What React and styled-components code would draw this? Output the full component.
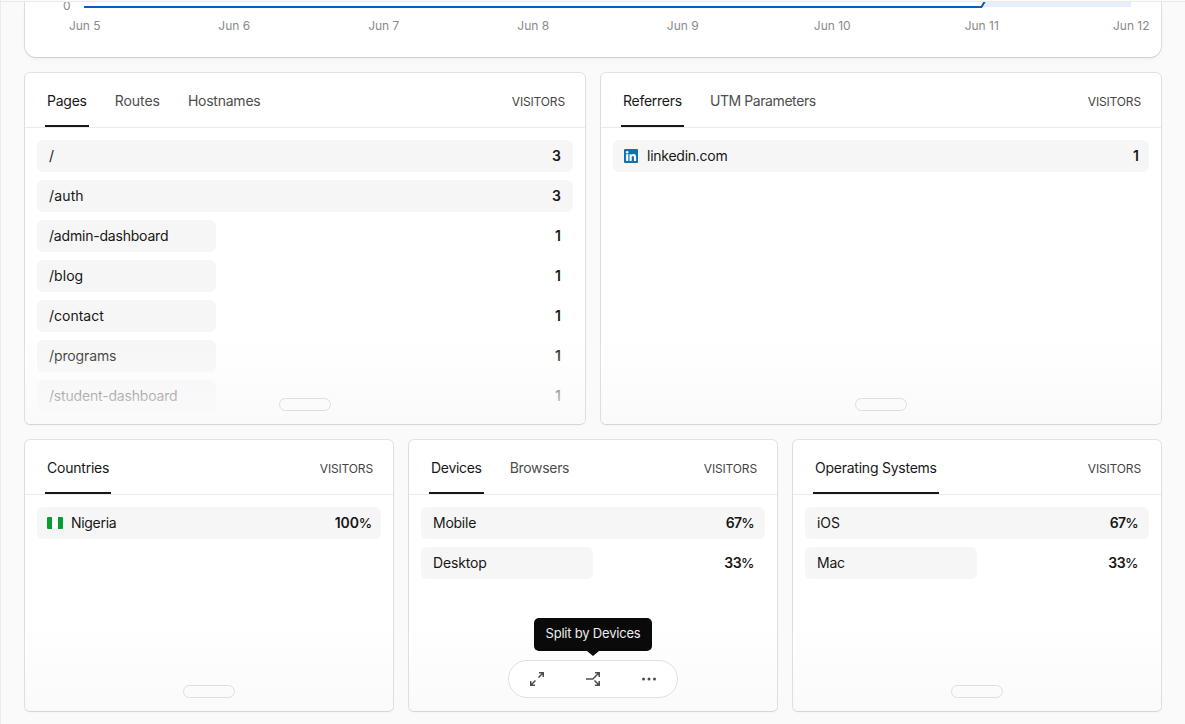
import React from "react";
import styled, { createGlobalStyle } from "styled-components";

const Global = createGlobalStyle`
  * { box-sizing: border-box; }
  html, body { margin: 0; height: 724px; overflow: hidden; background: #fafafa; }
  body { font-family: Inter, "Liberation Sans", sans-serif; color: #171717; }
`;

const Page = styled.main`
  height: 724px;
  overflow: hidden;
  border-left: 1px solid #ebebeb;
  padding: 0 24px;
  display: flex;
  flex-direction: column;
  gap: 16px;
  position: relative;
`;

const HeaderEdge = styled.div`
  position: absolute;
  inset: 0 0 auto 0;
  height: 2px;
  background: #fafafa;
  border-bottom: 1px solid #ebebeb;
`;

const shadow = "0 0 0 1px rgba(0,0,0,0.09), 0 1px 2px rgba(0,0,0,0.08)";

const ChartCard = styled.section`
  width: 1136px;
  height: 57px;
  flex: none;
  background: #fff;
  border-radius: 0 0 11px 11px;
  box-shadow: ${shadow}, 0 4px 8px -2px rgba(0, 0, 0, 0.04);
  overflow: hidden;
`;

const Plot = styled.svg`
  display: block;
  width: 1136px;
  height: 14px;
  font-size: 12px;
`;

const Axis = styled.div`
  display: grid;
  grid-template-columns: repeat(8, 149.5px);
  margin: 3px 0 0 -15px;
  font-size: 12px;
  line-height: 18px;
  color: #8a8a8a;
  text-align: center;
`;

const Grid = styled.div`
  display: grid;
  flex: none;
  width: 1136px;
  grid-template-columns: repeat(${(p) => p.$columns}, 1fr);
  gap: 16px;
`;

const Card = styled.section`
  position: relative;
  height: ${(p) => p.$height}px;
  background: #fff;
  border-radius: 5px;
  box-shadow: ${shadow};
`;

const Clip = styled.div`
  height: 100%;
  overflow: hidden;
  border-radius: inherit;
`;

const CardHeader = styled.header`
  height: 55px;
  display: flex;
  justify-content: space-between;
  padding: 0 20px;
  border-bottom: 1px solid #ebebeb;
`;

const Tabs = styled.nav`
  display: flex;
  gap: 24px;
`;

const Tab = styled.span`
  height: 54px;
  padding: 0 2px;
  font-size: 14px;
  line-height: 56px;
  white-space: nowrap;
  letter-spacing: ${(p) => p.$track || 0}px;
  color: ${(p) => (p.$active ? "#171717" : "#4d4d4d")};
  border-bottom: 2px solid ${(p) => (p.$active ? "#171717" : "transparent")};
`;

const Metric = styled.span`
  font-size: 12px;
  line-height: 57px;
  color: #444;
  letter-spacing: -0.15px;
`;

const Rows = styled.div`
  display: flex;
  flex-direction: column;
  gap: 8px;
  padding: 12px;
`;

const Row = styled.div`
  display: flex;
  align-items: center;
  justify-content: space-between;
  flex: none;
  height: 32px;
  padding: 0 ${(p) => (p.$icon ? 10 : 12)}px;
  position: relative;
  isolation: isolate;
`;

const Bar = styled.div`
  position: absolute;
  inset: 0 auto 0 0;
  z-index: -1;
  border-radius: 6px;
  background: #f6f6f6;
`;

const Label = styled.span`
  display: flex;
  align-items: center;
  gap: 8px;
  font-size: 14px;
  line-height: 32px;
  letter-spacing: ${(p) => p.$track || 0}px;
`;

const Value = styled.span`
  font-size: 14px;
  font-weight: 600;
  line-height: 32px;
  letter-spacing: ${(p) => p.$track || 0}px;
  margin-right: ${(p) => (p.$percent ? -1 : 0)}px;
`;

const Percent = styled.span`
  font-weight: 500;
  font-size: 13.5px;
`;

const Fade = styled.div`
  position: absolute;
  inset: auto 0 0 0;
  height: 85px;
  border-radius: 0 0 5px 5px;
  background: linear-gradient(rgba(250, 250, 250, 0), #fafafa);
`;

const Handle = styled.div`
  position: absolute;
  left: 50%;
  bottom: 13px;
  width: 52px;
  height: 13px;
  margin-left: -26px;
  border: 1px solid #dedede;
  border-radius: 7px;
  background: #fbfbfb;
`;

const Toolbar = styled.div`
  position: absolute;
  left: 50%;
  bottom: 13px;
  width: 170px;
  height: 38px;
  margin-left: -85px;
  display: flex;
  align-items: center;
  justify-content: space-around;
  border: 1px solid #e0e0e0;
  border-radius: 19px;
  background: #fff;
`;

const Tooltip = styled.div`
  position: absolute;
  left: 125px;
  top: 178px;
  width: 118px;
  height: 33px;
  border-radius: 5px;
  background: #0a0a0a;
  color: #ededed;
  font-size: 13px;
  line-height: 31px;
  text-align: center;
  white-space: nowrap;
  letter-spacing: -0.2px;

  &::after {
    content: "";
    position: absolute;
    left: 53px;
    top: 33px;
    border: 6px solid transparent;
    border-top: 5px solid #0a0a0a;
    border-bottom: 0;
  }
`;

const Icon = styled.svg`
  width: 16px;
  height: 16px;
  flex: none;
  fill: none;
  stroke: #4d4d4d;
  stroke-width: 1.5;
`;

const Flag = () => (
  <Icon viewBox="0 0 16 16">
    <g stroke="none">
      <rect x="0" y="2" width="16" height="12" rx="1" fill="#fff" />
      <path d="M1 2h4v12H1a1 1 0 0 1-1-1V3a1 1 0 0 1 1-1Z" fill="#0a9c2d" />
      <path d="M11 2h4a1 1 0 0 1 1 1v10a1 1 0 0 1-1 1h-4Z" fill="#0a9c2d" />
    </g>
  </Icon>
);

const LinkedIn = () => (
  <Icon viewBox="0 0 16 16">
    <g stroke="none">
      <rect x="1" y="1" width="14" height="14" rx="1" fill="#0a72b5" />
      <circle cx="4.2" cy="4.2" r="1.25" fill="#fff" />
      <path
        d="M3.1 6.25h2.2V13H3.1ZM6.5 6.25h2.1v.92c.3-.55 1-1.1 2.03-1.1 2.1 0 2.5 1.4 2.5 3.2V13h-2.2V9.7c0-.8 0-1.7-1.05-1.7s-1.2.85-1.2 1.65V13H6.5Z"
        fill="#fff"
      />
    </g>
  </Icon>
);

const Expand = () => (
  <Icon viewBox="0 0 16 16">
    <path d="M10 1.75h4.25V6M14 2 9.5 6.5M6 14.25H1.75V10M2 14l4.5-4.5" />
  </Icon>
);

const Split = () => (
  <Icon viewBox="0 0 16 16">
    <path d="M1 8h6.8l6-6M10 1.75h4.25V6M9.5 9.5 14 14M10 14.25h4.25V10" />
  </Icon>
);

const Dots = () => (
  <Icon viewBox="0 0 16 16">
    <g fill="#4d4d4d" stroke="none">
      <circle cx="2.5" cy="8" r="1.5" />
      <circle cx="8" cy="8" r="1.5" />
      <circle cx="13.5" cy="8" r="1.5" />
    </g>
  </Icon>
);

function Panel({ height, tabs, rows, children }) {
  return (
    <Card $height={height}>
      <Clip>
        <CardHeader>
          <Tabs>
            {tabs.map(([name, track], i) => (
              <Tab key={name} $active={i === 0} $track={track}>{name}</Tab>
            ))}
          </Tabs>
          <Metric>VISITORS</Metric>
        </CardHeader>
        <Rows>
          {rows.map((r) => (
            <Row key={r.name} $icon={!!r.icon}>
              <Bar style={{ width: r.width || "100%" }} />
              <Label $track={r.track}>{r.icon}{r.name}</Label>
              <Value $track={r.valueTrack} $percent={r.percent}>
                {r.value}
                {r.percent && <Percent>%</Percent>}
              </Value>
            </Row>
          ))}
        </Rows>
      </Clip>
      <Fade />
      {children || <Handle />}
    </Card>
  );
}

const third = "179px";
const pages = [
  { name: "/", value: "3" },
  { name: "/auth", value: "3", track: 0.15 },
  { name: "/admin-dashboard", value: "1", width: third, track: -0.2 },
  { name: "/blog", value: "1", width: third, track: 0.05 },
  { name: "/contact", value: "1", width: third },
  { name: "/programs", value: "1", width: third, track: -0.12 },
  { name: "/student-dashboard", value: "1", width: third, track: -0.18 },
];

const devices = [
  { name: "Mobile", value: "67", percent: true, track: -0.25, valueTrack: -0.7 },
  { name: "Desktop", value: "33", percent: true, width: "50%", track: -0.15, valueTrack: -0.5 },
];

const systems = [
  { name: "iOS", value: "67", percent: true, track: -0.1, valueTrack: -0.7 },
  { name: "Mac", value: "33", percent: true, width: "50%", track: -0.25, valueTrack: -0.5 },
];

const days = [5, 6, 7, 8, 9, 10, 11, 12];

export default function App() {
  return (
    <>
      <Global />
      <Page>
        <ChartCard>
          <Plot viewBox="0 0 1136 14">
            <path d="M957 7 961 0h145v7Z" fill="#e6eefa" />
            <path d="M59 7H956.5L960 1" fill="none" stroke="#0a5bc4" strokeWidth="2" />
            <text x="38" y="10" fill="#8a8a8a">0</text>
          </Plot>
          <Axis>{days.map((d) => <span key={d}>Jun {d}</span>)}</Axis>
        </ChartCard>
        <Grid $columns={2}>
          <Panel
            height={351}
            tabs={[["Pages", -0.25], ["Routes", -0.05], ["Hostnames", -0.24]]}
            rows={pages}
          />
          <Panel
            height={351}
            tabs={[["Referrers", -0.26], ["UTM Parameters", -0.42]]}
            rows={[{ name: "linkedin.com", value: "1", icon: <LinkedIn />, track: -0.25 }]}
          />
        </Grid>
        <Grid $columns={3}>
          <Panel
            height={271}
            tabs={[["Countries", -0.22]]}
            rows={[{ name: "Nigeria", value: "100", percent: true, icon: <Flag />, track: -0.3, valueTrack: -0.15 }]}
          />
          <Panel height={271} tabs={[["Devices", -0.3], ["Browsers", -0.32]]} rows={devices}>
            <Toolbar><Expand /><Split /><Dots /></Toolbar>
            <Tooltip>Split by Devices</Tooltip>
          </Panel>
          <Panel height={271} tabs={[["Operating Systems", -0.24]]} rows={systems} />
        </Grid>
        <HeaderEdge />
      </Page>
    </>
  );
}
